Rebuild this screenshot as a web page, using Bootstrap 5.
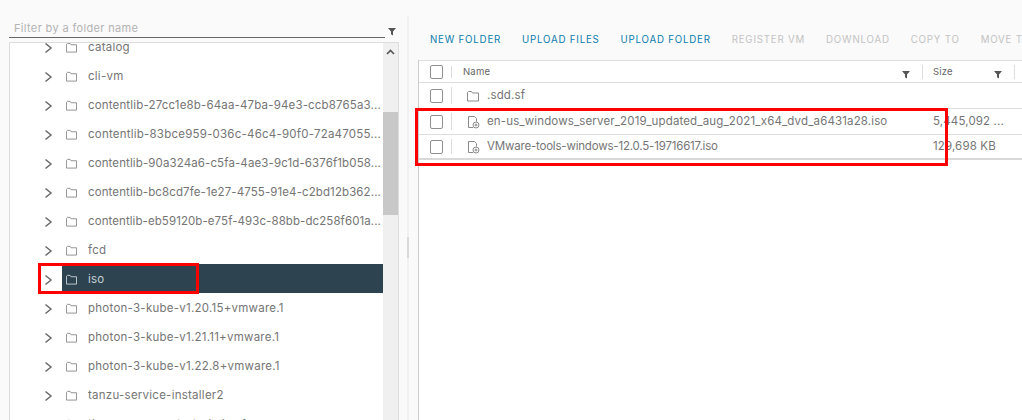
<!DOCTYPE html>
<html lang="en">
<head>
<meta charset="utf-8">
<title>Datastore browser</title>
<link href="https://cdn.jsdelivr.net/npm/bootstrap@5.3.0/dist/css/bootstrap.min.css" rel="stylesheet">
<style>
html,body{height:420px;overflow:hidden;background:#fafafa}
body{font-family:Inter,"Liberation Sans",sans-serif;font-size:11.5px;color:#666}
.shell{height:420px;padding-top:16px}
.leftside{width:399px;padding-left:9px;flex:none}
.filterbar{height:22px;width:390px;position:relative}
.filterinput{width:376px;height:22px;border:0;border-bottom:1px solid #666;background:transparent;padding:3px 5px 0;font-size:11px;letter-spacing:.35px;color:#999;outline:0}
.filterinput::placeholder{color:#b3b3b3;opacity:1}
.filtericon{position:absolute;left:379px;top:12px}
.treebox{margin-top:4px;width:390px;height:382px;border:1px solid #ddd;border-bottom:0;background:#fff;overflow:hidden;position:relative}
.treelist{margin-top:-11px}
.treerow{height:29px;display:flex;align-items:center;width:373px;color:#757575;letter-spacing:.25px;font-size:11.5px}
.caretbox{width:52px;flex:none;padding-left:34px;display:flex;align-items:center;height:100%;padding-top:2px}
.foldbox{width:26px;flex:none;display:flex;align-items:center;padding-left:4px;height:100%;padding-top:2px}
.lbl{white-space:nowrap;overflow:hidden;flex:1;padding-top:2px}
.sel .foldbox,.sel .lbl{background:#2d4350}
.sel .lbl{color:#c9d2d7;align-self:stretch;display:flex;align-items:center}
.sel .foldbox svg{stroke:#c9d2d7}
.scroller{position:absolute;right:0;top:0;bottom:0;width:15px;background:#f0f0f0}
.thumb{position:absolute;top:69px;left:0;right:0;height:103px;background:#c8c8c8;display:block}
.scroller svg{position:absolute;left:3px;top:6px}
.divider{width:19px;flex:none}
.splitline{width:2px;height:404px;background:#f1f1f1;margin-left:8px;position:relative}
.grip{position:absolute;left:0;top:221px;width:2px;height:21px;background:#d9d9d9}
.rightside{flex:1;min-width:0}
.actions{height:44px;padding-left:12px;gap:21px;align-items:flex-start;padding-top:17px;white-space:nowrap;overflow:hidden}
.actions a{font-size:9.7px;letter-spacing:.8px;text-decoration:none;color:#0a7cad;line-height:14px}
.actions a.off{color:#c3c3c3}
.gridpane{background:#fff;border-left:1px solid #ccc;height:360px}
.datagrid{border-top:1px solid #ddd;font-size:11.5px}
.gridrow{height:26px;display:flex;align-items:center;border-bottom:1px solid #ddd;color:#757575;letter-spacing:.14px}
.gridrow.head{height:22px;color:#666;font-size:9.5px;letter-spacing:.2px;padding-top:1px}
.gridrow.last{height:25px;border-bottom:2px solid #d9d9d9}
.chkcell{width:34px;flex:none;height:100%;display:flex;align-items:center;padding-left:11px;position:relative}
.chkcell::after{content:"";position:absolute;left:32px;top:4px;bottom:4px;width:1px;background:#ddd}
.chk{width:13px;height:14px;border:1px solid #8f8f8f;border-radius:2px;background:#fff;display:block}
.namecell{width:470px;flex:none;display:flex;align-items:center;white-space:nowrap;position:relative;height:100%}
.sizecell{white-space:nowrap;padding-left:10px;width:92px;flex:none;position:relative;height:100%;display:flex;align-items:center}
.head .namecell{padding-left:10px}
.colsep{position:absolute;right:0;top:3px;bottom:3px;width:1px;background:#ddd}
.headfilter{position:absolute;top:9px}
.hf1{right:13px}
.hf2{left:71px}
.rowfolder{margin:0 8px 0 14px}
.isoicon{margin:0 7px 0 14px}
.tighttext{letter-spacing:-.19px}
.redbox{position:absolute;border:3px solid #f00;pointer-events:none}
.rb1{left:38px;top:263px;width:161px;height:31px}
.rb2{left:415px;top:108px;width:533px;height:58px}
</style>
</head>
<body>
<div class="shell d-flex">
  <div class="leftside">
    <div class="filterbar">
      <input class="filterinput" type="text" placeholder="Filter by a folder name">
      <svg class="filtericon" width="8" height="8" viewBox="0 0 8 8"><path d="M0 0H8L5 3.6V7.5L3 6.2V3.6Z" fill="#555"/></svg>
    </div>
    <div class="treebox">
      <div class="treelist" id="tree"></div>
      <div class="scroller"><svg width="9" height="6" viewBox="0 0 9 6"><path d="M1 5L4.500 1.500L8 5" fill="none" stroke="#555" stroke-width="1.600"/></svg><span class="thumb"></span></div>
    </div>
  </div>
  <div class="divider"><div class="splitline"><span class="grip"></span></div></div>
  <div class="rightside">
    <div class="actions d-flex">
      <a href="#">NEW FOLDER</a><a href="#">UPLOAD FILES</a><a href="#">UPLOAD FOLDER</a><a href="#" class="off">REGISTER VM</a><a href="#" class="off">DOWNLOAD</a><a href="#" class="off">COPY TO</a><a href="#" class="off">MOVE TO</a>
    </div>
    <div class="gridpane">
    <div class="datagrid">
      <div class="gridrow head">
        <div class="chkcell"><span class="chk"></span></div>
        <div class="namecell">Name<svg class="headfilter hf1" width="8" height="8" viewBox="0 0 8 8"><path d="M0 0H8L5 3.6V7.5L3 6.2V3.600Z" fill="#555"/></svg><span class="colsep"></span></div>
        <div class="sizecell">Size<svg class="headfilter hf2" width="8" height="8" viewBox="0 0 8 8"><path d="M0 0H8L5 3.6V7.5L3 6.2V3.600Z" fill="#555"/></svg><span class="colsep"></span></div>
      </div>
      <div class="gridrow">
        <div class="chkcell"><span class="chk"></span></div>
        <div class="namecell"><svg class="rowfolder" width="12" height="12" viewBox="0 0 12 12" fill="none" stroke="#8a8a8a"><path d="M.5 2.500V11H11.500V3H5.500L4.500 1.500H1.500Z"/></svg>.sdd.sf</div>
        <div class="sizecell"></div>
      </div>
      <div class="gridrow">
        <div class="chkcell"><span class="chk"></span></div>
        <div class="namecell"><svg class="isoicon" width="13" height="14" viewBox="0 0 13 14" fill="none" stroke="#8a8a8a"><path d="M6 12.500H1.500V1.500H7.500L9.500 3.500V6.500"/><circle cx="9" cy="10" r="3"/><circle cx="9" cy="10" r="1"/></svg>en-us_windows_server_2019_updated_aug_2021_x64_dvd_a6431a28.iso</div>
        <div class="sizecell">5,445,092 ...</div>
      </div>
      <div class="gridrow last">
        <div class="chkcell"><span class="chk"></span></div>
        <div class="namecell"><svg class="isoicon" width="13" height="14" viewBox="0 0 13 14" fill="none" stroke="#8a8a8a"><path d="M6 12.500H1.500V1.500H7.500L9.500 3.500V6.500"/><circle cx="9" cy="10" r="3"/><circle cx="9" cy="10" r="1"/></svg><span class="tighttext">VMware-tools-windows-12.0.5-19716617.iso</span></div>
        <div class="sizecell">129,698 KB</div>
      </div>
    </div>
    </div>
  </div>
</div>
<div class="redbox rb1"></div>
<div class="redbox rb2"></div>
<script>
var names=["catalog","cli-vm","contentlib-27cc1e8b-64aa-47ba-94e3-ccb8765a3...","contentlib-83bce959-036c-46c4-90f0-72a47055...","contentlib-90a324a6-c5fa-4ae3-9c1d-6376f1b058...","contentlib-bc8cd7fe-1e27-4755-91e4-c2bd12b362...","contentlib-eb59120b-e75f-493c-88bb-dc258f601a...","fcd","iso","photon-3-kube-v1.20.15+vmware.1","photon-3-kube-v1.21.11+vmware.1","photon-3-kube-v1.22.8+vmware.1","tanzu-service-installer2","thanos-compact-sts-kube-1"];
var h="";
names.forEach(function(n){
 h+='<div class="treerow'+(n=="iso"?" sel":"")+'"><span class="caretbox"><svg width="9" height="12" viewBox="0 0 9 12"><path d="M1.500 1.500L7 6L1.500 10.500" fill="none" stroke="#6a6a6a" stroke-width="1.500"/></svg></span><span class="foldbox"><svg width="11" height="11" viewBox="0 0 12 12" fill="none" stroke="#8a8a8a"><path d="M.5 2.500V11H11.500V3H5.500L4.500 1.500H1.500Z"/></svg></span><span class="lbl">'+n+'</span></div>';
});
document.getElementById("tree").innerHTML=h;
/* long folder names are fitted to the 293px label column, as the reference's text is */
document.querySelectorAll(".lbl").forEach(function(el){
 var t=el.textContent;
 if(t.slice(-3)!=="...")return;
 el.style.letterSpacing="0px";
 var r=document.createRange();r.selectNodeContents(el);
 var w=r.getBoundingClientRect().width;
 el.style.letterSpacing=((293-w)/t.length).toFixed(3)+"px";
});
</script>
<script src="https://cdn.jsdelivr.net/npm/bootstrap@5.3.0/dist/js/bootstrap.bundle.min.js"></script>
</body>
</html>
